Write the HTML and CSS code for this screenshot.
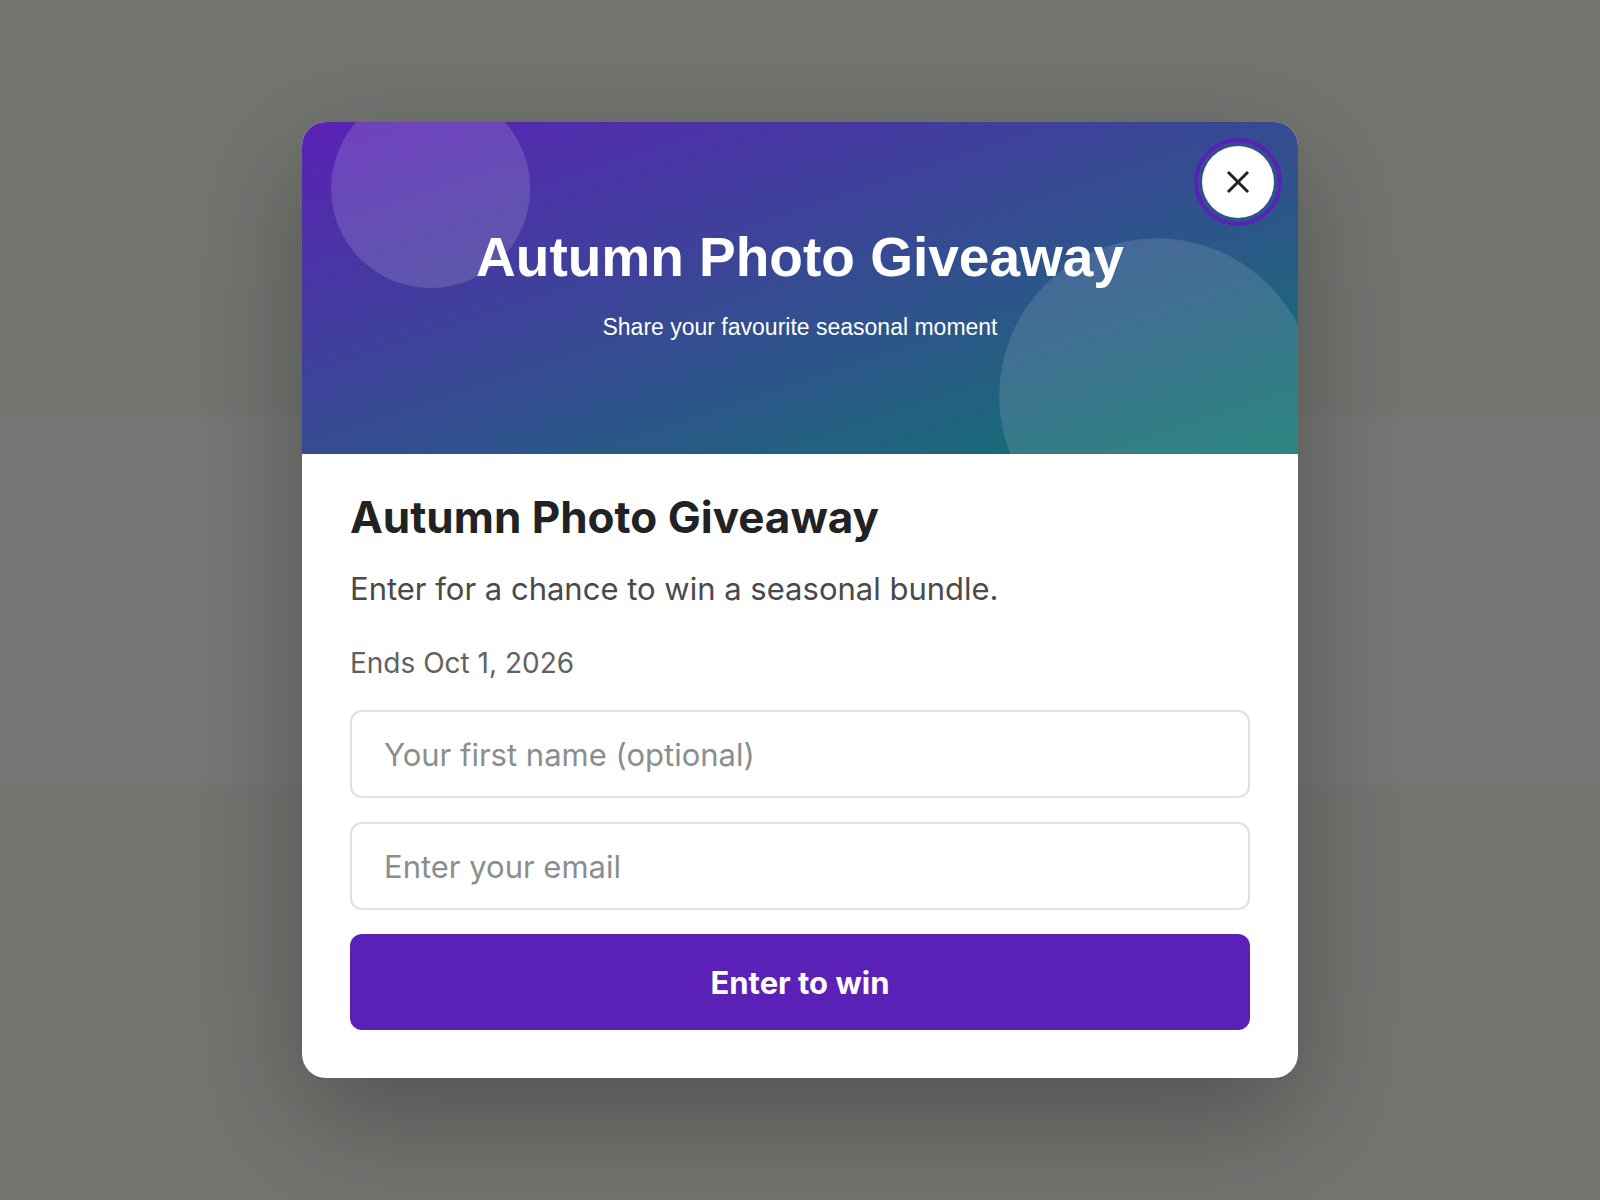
FILE: index.html
```html
<!DOCTYPE html>
<html lang="en">
  <head>
    <meta charset="UTF-8" />
    <title>Autumn Photo Giveaway</title>
    <meta name="viewport" content="width=device-width, initial-scale=1.0" />
    <link rel="stylesheet" href="styles.css">
  </head>
  <body>
    <div class="overlay">
      <div class="modal" role="dialog" aria-modal="true" aria-labelledby="modal-title">
        <button class="close" type="button" aria-label="Close">
          <svg viewBox="0 0 24 24" width="24" height="24" aria-hidden="true">
            <path d="M2 2L22 22M22 2L2 22" />
          </svg>
        </button>
        <div class="banner">
          <svg class="banner-art" viewBox="0 0 1200 400" aria-hidden="true">
            <defs>
              <linearGradient id="banner-bg" x1="0" y1="0" x2="1" y2="1">
                <stop offset="0" stop-color="#5b21b6" />
                <stop offset="1" stop-color="#0f766e" />
              </linearGradient>
            </defs>
            <rect width="1200" height="400" fill="url(#banner-bg)" />
            <circle cx="155" cy="80" r="120" fill="#fff" fill-opacity="0.14" />
            <circle cx="1030" cy="330" r="190" fill="#fff" fill-opacity="0.12" />
          </svg>
          <p class="banner-title">Autumn Photo Giveaway</p>
          <p class="banner-text">Share your favourite seasonal moment</p>
        </div>
        <div class="content">
          <h2 class="title" id="modal-title">Autumn Photo Giveaway</h2>
          <p class="description">Enter for a chance to win a seasonal bundle.</p>
          <p class="ends">Ends Oct 1, 2026</p>
          <form class="form" method="POST" action="/enter">
            <input class="field" type="text" name="name" placeholder="Your first name (optional)" aria-label="Your first name" />
            <input class="field" type="email" name="email" placeholder="Enter your email" aria-label="Email" />
            <button class="submit" type="submit">Enter to win</button>
          </form>
        </div>
      </div>
    </div>
  </body>
</html>
```
FILE: styles.css
```css
* {
  box-sizing: border-box;
}
body {
  margin: 0;
  font-family: Inter, "Liberation Sans", sans-serif;
  color: #202223;
}
.overlay {
  min-height: 100vh;
  padding: 24px;
  display: flex;
  align-items: center;
  justify-content: center;
  /* blurred page bands behind the modal */
  background: linear-gradient(
    #737571 34%,
    #777775 35%,
    #777775 65%,
    #737571 66%
  );
}
.modal {
  position: relative;
  width: 100%;
  max-width: 996px;
  background-color: #fff;
  border-radius: 24px;
  overflow: hidden;
  box-shadow: 0 40px 120px rgba(0, 0, 0, 0.3);
}
.close {
  position: absolute;
  top: 24px;
  right: 24px;
  z-index: 1;
  width: 72px;
  height: 72px;
  padding: 0;
  display: flex;
  align-items: center;
  justify-content: center;
  border: 0;
  border-radius: 50%;
  background-color: #fff;
  cursor: pointer;
  outline: 4px solid #5b21b6;
  outline-offset: 4px;
}
.close path {
  fill: none;
  stroke: #202223;
  stroke-width: 3;
}
.banner {
  position: relative;
  aspect-ratio: 3 / 1;
  padding-bottom: 10px;
  display: flex;
  flex-direction: column;
  align-items: center;
  justify-content: center;
  gap: 24px;
  color: #fff;
  font-family: "Liberation Sans", Arial, sans-serif;
  text-align: center;
}
.banner-art {
  position: absolute;
  inset: 0;
  width: 100%;
  height: 100%;
}
.banner-title,
.banner-text {
  position: relative;
  margin: 0;
}
.banner-title {
  font-size: 55px;
  line-height: 64px;
  font-weight: 700;
}
.banner-text {
  font-size: 23px;
  line-height: 28px;
}
.content {
  padding: 32px 48px 48px;
}
.title {
  margin: 0 0 16px;
  font-size: 44px;
  line-height: 62px;
  font-weight: 700;
}
.description {
  margin: 0 0 28px;
  font-size: 31px;
  line-height: 50px;
  color: #4a4a4a;
}
.ends {
  margin: 0 0 26px;
  font-size: 28px;
  line-height: 42px;
  color: #616161;
}
.form {
  display: flex;
  flex-direction: column;
  gap: 24px;
}
.field {
  width: 100%;
  height: 88px;
  padding: 0 32px;
  border: 2px solid #e0e0e0;
  border-radius: 12px;
  background-color: #fff;
  font-family: inherit;
  font-size: 31px;
  color: #202223;
}
.field::placeholder {
  color: #8c8e8e;
}
.submit {
  height: 96px;
  border: 0;
  border-radius: 12px;
  background-color: #5b21b6;
  color: #fff;
  font-family: inherit;
  font-size: 31px;
  font-weight: 700;
  cursor: pointer;
}
```
